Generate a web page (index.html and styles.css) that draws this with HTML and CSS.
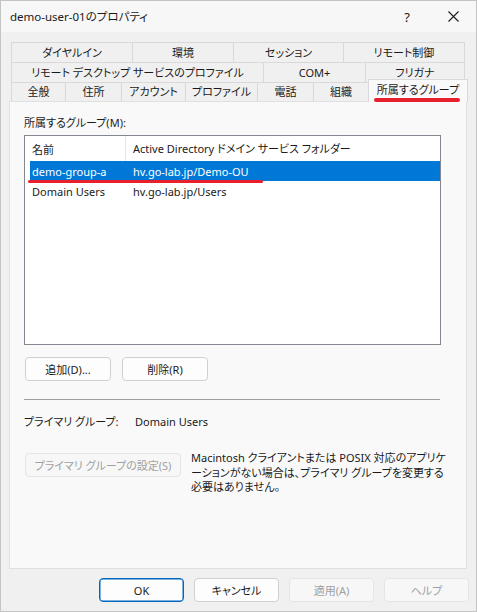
FILE: index.html
```html
<!DOCTYPE html>
<html lang="ja">
<head>
  <meta charset="UTF-8" />
  <title>demo-user-01のプロパティ</title>
  <link rel="stylesheet" href="styles.css">
</head>
<body>

  <div class="window">
    <div class="titlebar">
      <span class="title">demo-user-01のプロパティ</span>
      <span class="caption-btn help">?</span>
      <span class="caption-btn">
        <svg width="11" height="11" viewBox="0 0 11 11">
          <path d="M0.5 0.5 L10.5 10.5 M10.5 0.5 L0.5 10.5" stroke="#1b1b1b" stroke-width="1.1" fill="none" />
        </svg>
      </span>
    </div>

    <div class="content">
      <!-- three rows of tabs, the bottom row holds the active one -->
      <div class="tabs">
        <div class="tab-row row-1">
          <div class="tab">ダイヤルイン</div>
          <div class="tab">環境</div>
          <div class="tab">セッション</div>
          <div class="tab">リモート制御</div>
        </div>
        <div class="tab-row row-2">
          <div class="tab">リモート デスクトップ サービスのプロファイル</div>
          <div class="tab">COM+</div>
          <div class="tab">フリガナ</div>
        </div>
        <div class="tab-row row-3">
          <div class="tab">全般</div>
          <div class="tab">住所</div>
          <div class="tab">アカウント</div>
          <div class="tab">プロファイル</div>
          <div class="tab">電話</div>
          <div class="tab">組織</div>
          <div class="tab active">所属するグループ<span class="mark mark-tab"></span></div>
        </div>
      </div>

      <div class="panel">
        <div class="label">所属するグループ(M):</div>

        <div class="list">
          <div class="list-head">
            <span class="col-name">名前</span>
            <span class="col-folder">Active Directory ドメイン サービス フォルダー</span>
          </div>
          <div class="list-row selected">
            <span class="col-name">demo-group-a</span>
            <span class="col-folder">hv.go-lab.jp/Demo-OU</span>
          </div>
          <div class="list-row">
            <span class="col-name">Domain Users</span>
            <span class="col-folder">hv.go-lab.jp/Users</span>
          </div>
          <span class="mark mark-row"></span>
        </div>

        <div class="list-buttons">
          <button class="btn">追加(D)...</button>
          <button class="btn">削除(R)</button>
        </div>

        <div class="separator"></div>

        <div class="primary">
          <span class="primary-label">プライマリ グループ:</span>
          <span>Domain Users</span>
        </div>

        <div class="primary-set">
          <button class="btn btn-wide" disabled>プライマリ グループの設定(S)</button>
          <p class="note">Macintosh クライアントまたは POSIX 対応のアプリケーションがない場合は、プライマリ グループを変更する必要はありません。</p>
        </div>
      </div>

      <div class="footer">
        <button class="btn default">OK</button>
        <button class="btn">キャンセル</button>
        <button class="btn" disabled>適用(A)</button>
        <button class="btn" disabled>ヘルプ</button>
      </div>
    </div>
  </div>

</body>
</html>
```

FILE: styles.css
```css
* {
  box-sizing: border-box;
}
body {
  margin: 0;
  padding: 0;
  font-family: "Noto Sans", "Noto Sans CJK JP", sans-serif;
  font-size: 11px;
  font-feature-settings: "palt";
  color: #1a1a1a;
  background: #f0f0f0;
}

.window {
  width: 477px;
  height: 612px;
  border: 1px solid #c4c4c4;
  background: #f0f0f0;
  display: flex;
  flex-direction: column;
}

/* title bar */
.titlebar {
  height: 31px;
  flex-shrink: 0;
  display: flex;
  align-items: center;
  background: #f7f7f7;
}
.title {
  flex: 1;
  padding-left: 9px;
  font-size: 11.5px;
  line-height: 16px;
}
.caption-btn {
  width: 46px;
  height: 31px;
  display: flex;
  align-items: center;
  justify-content: center;
}
.help {
  font-size: 13px;
}

.content {
  padding: 10px 0 0 8px;
}

/* tabs */
.tabs {
  margin-left: 2px;
}
.tab-row {
  display: grid;
}
.row-1 {
  grid-template-columns: 121px 101px 110px 122px;
  height: 20px;
}
.row-2 {
  grid-template-columns: 252px 102px 100px;
  height: 20px;
}
.row-3 {
  grid-template-columns: 54px 56px 64px 72px 56px 55px 100px;
  height: 19px;
}
.tab {
  border-top: 1px solid #d9d9d9;
  border-left: 1px solid #d9d9d9;
  display: flex;
  align-items: center;
  justify-content: center;
  line-height: 16px;
  white-space: nowrap;
}
.tab:last-child {
  border-right: 1px solid #d9d9d9;
}
.tab.active {
  position: relative;
  z-index: 1;
  height: 23px;
  margin-top: -3px;
  margin-bottom: -1px;
  padding-bottom: 3px;
  background: #f9f9f9;
}

/* red highlight strokes */
.mark {
  position: absolute;
  background: #e8202b;
  border-radius: 2px;
}
.mark-tab {
  left: 5px;
  top: 18px;
  width: 86px;
  height: 4px;
}
.mark-row {
  left: 3px;
  top: 44px;
  width: 235px;
  height: 3px;
}

.panel {
  width: 458px;
  height: 468px;
  border: 1px solid #e0e0e0;
  background: #f9f9f9;
  padding: 13px 0 0 14px;
}
.label {
  line-height: 16px;
}

/* group list */
.list {
  position: relative;
  width: 417px;
  height: 210px;
  margin-top: 4px;
  border: 1px solid #828790;
  background: #fff;
  padding: 0 0 0 5px;
}
.list-head,
.list-row {
  display: grid;
  grid-template-columns: 95px 1fr;
  align-items: center;
  white-space: nowrap;
}
.list-head {
  height: 25px;
}
.list-row {
  height: 20px;
}
.col-name {
  padding-left: 2px;
}
.col-folder {
  padding-left: 8px;
}
.list-head .col-folder {
  padding-left: 7px;
  border-left: 1px solid #e5e5e5;
  height: 25px;
  line-height: 25px;
}
.list-row.selected {
  background: #0078d7;
  color: #fff;
}

/* buttons */
.btn {
  font: inherit;
  font-feature-settings: "palt";
  height: 24px;
  width: 86px;
  padding: 0;
  border: 1px solid #d0d0d0;
  border-radius: 4px;
  background: #fdfdfd;
  color: #1a1a1a;
}
.btn:disabled {
  color: #a0a0a0;
  border-color: #e5e5e5;
  background: #f7f7f7;
}
.btn.default {
  border-color: #0067c0;
  box-shadow: inset 0 0 0 0.5px #0067c0;
}

.list-buttons {
  display: flex;
  gap: 11px;
  margin: 12px 0 0 1px;
}

.separator {
  width: 416px;
  height: 1px;
  margin-top: 18px;
  background: #a0a0a0;
}

.primary {
  display: flex;
  margin-top: 14px;
  line-height: 16px;
}
.primary-label {
  width: 111px;
}

.primary-set {
  display: flex;
  gap: 10px;
  margin: 23px 0 0 1px;
}
.btn-wide {
  width: 156px;
  flex-shrink: 0;
}
.note {
  margin: -2px 0 0;
  width: 258px;
  line-height: 14.5px;
}

.footer {
  display: flex;
  justify-content: flex-end;
  gap: 10px;
  margin-top: 9px;
  padding-right: 7px;
}
.footer .btn {
  width: 85px;
}
```
